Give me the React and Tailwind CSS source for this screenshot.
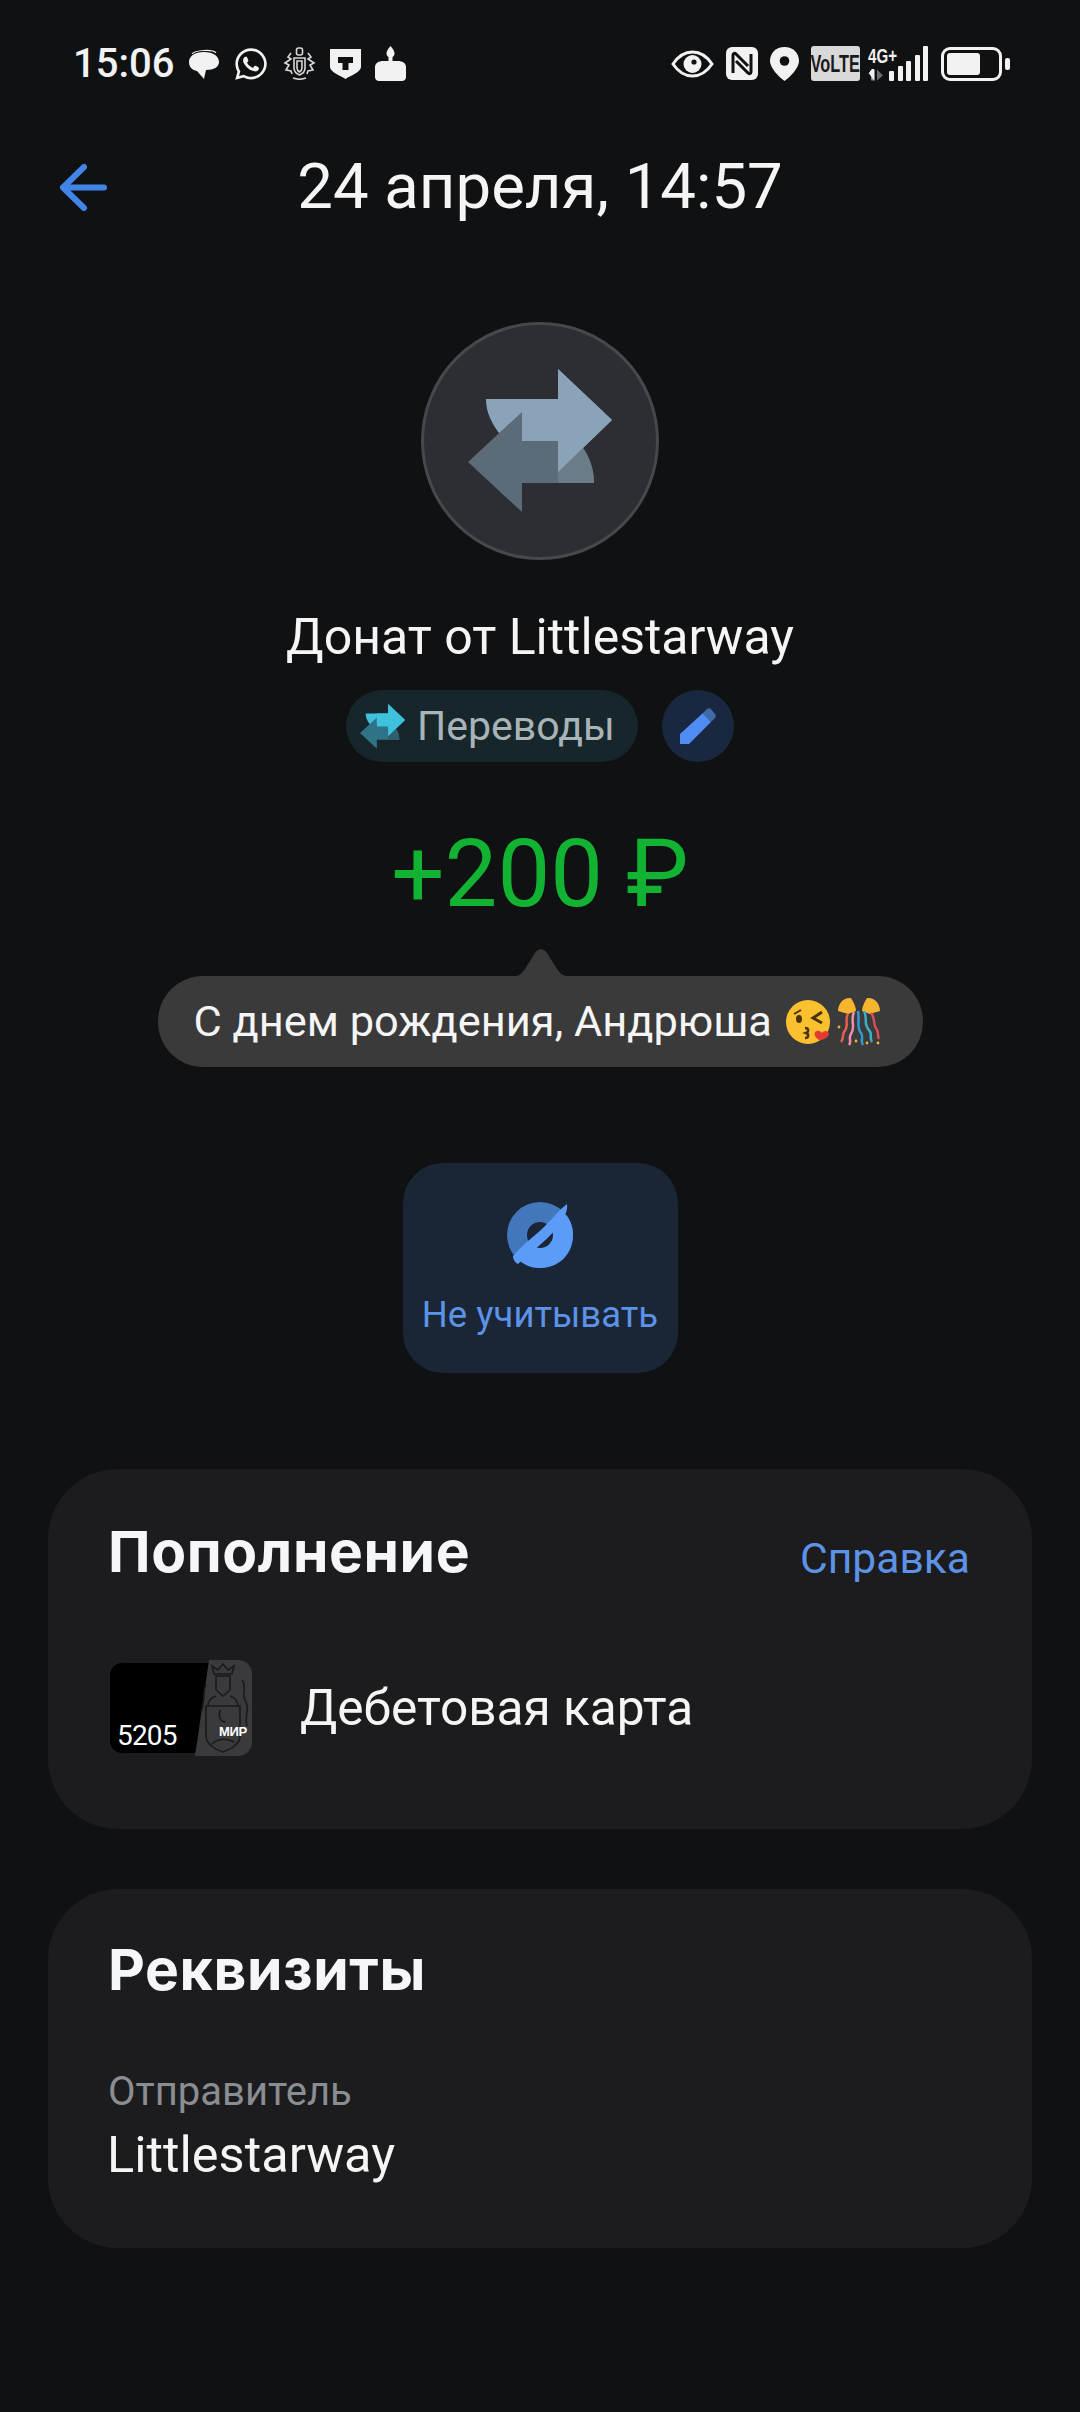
import { FaWhatsapp } from 'react-icons/fa';

const FONT = "font-['Roboto','Noto_Sans',sans-serif]";

function ArrowsIcon({ light, dark, mid, className }) {
  return (
    <svg viewBox="47 47 144 144" className={className}>
      <path d="M65 77H137V47L191 98L137 150V119H101V111H78C70 100 65 90 65 77Z" fill={light} />
      <path d="M173 161H101V190L47 140L101 90V119H137V126H162C169 136 173 148 173 161Z" fill={dark} />
      <path d="M137 126H162C169 136 173 148 173 161H137Z" fill={mid} />
      <path d="M137 47L191 98L137 150Z" fill={light} />
      <path d="M101 77H137V119H101V90Z" fill={light} />
    </svg>
  );
}

function MessageIcon() {
  return (
    <svg viewBox="0 0 30 30" className="h-[30px] w-[30px]">
      <path d="M3 5C6 1 24 0 27 4" fill="none" stroke="#f2f2f2" strokeWidth="1.2" />
      <path d="M0 13C0 7 6 3 15 3C24 3 30 7 30 13C30 18 25 21 17 21L15 30L8 22C3 21 0 18 0 13Z" fill="#f2f2f2" />
    </svg>
  );
}

function CrestIcon() {
  return (
    <svg viewBox="0 0 33 33" className="h-[33px] w-[33px]" fill="none" stroke="#d8d8d8" strokeWidth="1.6">
      <rect x="13.5" y="1" width="6" height="7" rx="2" />
      <path d="M11 11H22V21C22 25 19 27 16.5 28C14 27 11 25 11 21Z" />
      <path d="M14 14H19V21C19 23 18 24 16.5 25C15 24 14 23 14 21Z" />
      <path d="M8 6L5 10L8 12L2 16L6 18L3 23L8 24L9 27" />
      <path d="M25 6L28 10L25 12L31 16L27 18L30 23L25 24L24 27" />
      <path d="M10 31C14 32.5 19 32.5 23 31" />
    </svg>
  );
}

function ShieldIcon() {
  return (
    <svg viewBox="0 0 31 31" className="h-[31px] w-[31px]">
      <path d="M0 1H31V19C31 24 20 28 15.5 31C11 28 0 24 0 19Z" fill="#f2f2f2" />
      <path d="M8 9H23V15H18.5V22H12.5V15H8Z" fill="#101112" />
    </svg>
  );
}

function CakeIcon() {
  return (
    <svg viewBox="0 0 31 35" className="h-[35px] w-[31px]">
      <path d="M15.5 0C18 3 19.5 5 19.5 7.5C19.5 10 17.5 11.5 15.5 11.5C13.5 11.5 11.5 10 11.5 7.5C11.5 5 13 3 15.5 0Z" fill="#f2f2f2" />
      <path d="M13.5 11H17.5V16H13.5Z" fill="#f2f2f2" />
      <path d="M0 21C0 17 4 15 8 15H23C27 15 31 17 31 21V31C31 33.5 29 35 27 35H4C2 35 0 33.5 0 31Z" fill="#f2f2f2" />
    </svg>
  );
}

function EyeIcon() {
  return (
    <svg viewBox="0 0 43 28" className="h-[28px] w-[43px]">
      <path d="M2 14C8 5 14 2 21.5 2C29 2 35 5 41 14C35 23 29 26 21.5 26C14 26 8 23 2 14Z" fill="none" stroke="#f2f2f2" strokeWidth="3" />
      <circle cx="21.5" cy="14" r="9" fill="#f2f2f2" />
      <circle cx="23" cy="12" r="2.6" fill="#101112" />
    </svg>
  );
}

function NfcIcon() {
  return (
    <svg viewBox="0 0 32 33" className="h-[33px] w-[32px]">
      <rect width="32" height="33" rx="6" fill="#f2f2f2" />
      <path d="M7 26V8C7 6 9 6 10 7L22 19" fill="none" stroke="#101112" strokeWidth="3" />
      <path d="M25 7V25C25 27 23 27 22 26L10 14" fill="none" stroke="#101112" strokeWidth="3" />
    </svg>
  );
}

function PinIcon() {
  return (
    <svg viewBox="0 0 29 34" className="h-[34px] w-[29px]">
      <path d="M14.5 0C23 0 29 6 29 14C29 21 20 30 14.5 34C9 30 0 21 0 14C0 6 6 0 14.5 0Z" fill="#f2f2f2" />
      <circle cx="14.5" cy="14" r="4.8" fill="#101112" />
    </svg>
  );
}

function SignalBars() {
  const bars = [10, 15, 20, 26, 35];
  return (
    <div className="flex h-[35px] items-end gap-[3.5px]">
      {bars.map((h) => (
        <div key={h} className="w-[5px] rounded-[1px] bg-[#f2f2f2]" style={{ height: h }} />
      ))}
    </div>
  );
}

function StatusBar() {
  return (
    <div className={`flex h-[37px] items-center justify-between pl-[73px] pr-[70px] ${FONT}`}>
      <div className="flex items-center">
        <span className="text-[40px] leading-none font-medium text-[#f2f2f2]">15:06</span>
        <div className="ml-[15px] flex items-center gap-[14px]">
          <MessageIcon />
          <FaWhatsapp className="h-[36px] w-[36px] text-[#f2f2f2]" />
          <CrestIcon />
          <ShieldIcon />
          <CakeIcon />
        </div>
      </div>
      <div className="flex items-center">
        <EyeIcon />
        <div className="ml-[12px]"><NfcIcon /></div>
        <div className="ml-[12px]"><PinIcon /></div>
        <div className="ml-[12px] flex h-[35px] w-[49px] items-center justify-center rounded-[3px] bg-[#d9d9d9]">
          <span className="scale-x-[0.68] font-['Liberation_Sans',sans-serif] text-[24px] leading-none font-bold text-[#1a1a1a]">VoLTE</span>
        </div>
        <div className="ml-[8px] flex items-end">
          <div className="flex h-[35px] w-[21px] flex-col">
            <span className="origin-left scale-x-[0.72] font-['Liberation_Sans',sans-serif] text-[21px] leading-[20px] font-bold whitespace-nowrap text-[#f2f2f2]">4G+</span>
            <svg viewBox="0 0 16 11" className="mt-[3px] h-[12px] w-[16px]">
              <path d="M4 0V11M1 4L4 0L6 0V11" fill="#f2f2f2" stroke="#f2f2f2" strokeWidth="1" />
              <path d="M9 0V11L15 6Z" fill="#6d6d6d" />
            </svg>
          </div>
          <SignalBars />
        </div>
        <div className="ml-[13px] flex items-center">
          <div className="flex h-[34px] w-[61px] items-center rounded-[9px] border-[3px] border-[#f2f2f2] p-[3px]">
            <div className="h-[22px] w-[33px] rounded-[3px] bg-[#f2f2f2]" />
          </div>
          <div className="ml-[3px] h-[12px] w-[5px] rounded-[2px] bg-[#f2f2f2]" />
        </div>
      </div>
    </div>
  );
}

function IgnoreIcon() {
  return (
    <svg viewBox="0 0 66 66" className="h-[66px] w-[66px]">
      <circle cx="33" cy="33" r="33" fill="#4277bb" />
      <path d="M58 12C64 18 66 26 66 33C66 52 52 66 33 66C24 66 17 63 11 57Z" fill="#5b9cf8" />
      <circle cx="33" cy="33" r="13" fill="#1a2536" />
      <path d="M60 2C61 8 58 16 48 28C38 40 24 50 11 62C7 60 6 56 6 54C16 42 28 34 38 24C46 16 52 8 60 2Z" fill="#5b9cf8" />
    </svg>
  );
}

function KissEmoji() {
  return (
    <svg viewBox="0 0 46 46" className="h-[46px] w-[46px]">
      <circle cx="22" cy="23" r="22" fill="#fbc02d" />
      <path d="M8 15L15 11" stroke="#4a3410" strokeWidth="2" fill="none" />
      <ellipse cx="13" cy="20" rx="3" ry="4" fill="#4a3410" />
      <path d="M36 13L27 19L36 24" stroke="#4a3410" strokeWidth="3" fill="none" />
      <path d="M19 29C23 29 23 33 20 34C23 35 23 39 19 39" stroke="#4a3410" strokeWidth="2.5" fill="none" />
      <path d="M33 41C28 38 27 33 31 32C33 31 35 33 36 34C37 32 40 31 42 33C45 36 40 41 33 41Z" fill="#e53935" />
    </svg>
  );
}

function ConfettiEmoji() {
  return (
    <svg viewBox="0 0 46 50" className="h-[50px] w-[46px]" fill="none" strokeWidth="2.5">
      <path d="M2 14C2 6 8 0 15 1C18 6 20 10 20 14L12 17Z" fill="#f5b52e" />
      <path d="M44 14C44 6 38 0 31 1C28 6 26 10 26 14L34 17Z" fill="#f5b52e" />
      <path d="M12 17C8 24 14 28 8 35C6 38 8 42 5 45" stroke="#e4604e" />
      <path d="M18 15C14 24 20 30 15 37C12 41 16 44 13 48" stroke="#f08fa8" />
      <path d="M22 14C24 24 20 30 25 36C28 40 24 44 27 48" stroke="#2f9ad6" />
      <path d="M28 14C32 22 27 27 33 33C37 37 33 41 36 45" stroke="#3ab0c9" />
      <path d="M35 16C40 22 36 27 41 33C43 36 41 39 43 42" stroke="#d94e57" />
      <circle cx="3" cy="30" r="1.4" fill="#f5b52e" stroke="none" />
      <circle cx="20" cy="44" r="1.4" fill="#f5b52e" stroke="none" />
      <circle cx="42" cy="46" r="1.4" fill="#f5b52e" stroke="none" />
      <circle cx="31" cy="46" r="1.4" fill="#f5b52e" stroke="none" />
    </svg>
  );
}

function BankCard() {
  return (
    <div className="relative h-[96px] w-[142px]">
      <div className="absolute top-[3px] left-0 flex h-[90px] w-[130px] items-end rounded-[12px] bg-black pb-[3px] pl-[7px]">
        <span className="text-[28px] leading-none tracking-[-0.8px] text-white">5205</span>
      </div>
      <svg viewBox="5 0 57 96" className="absolute top-0 right-0 h-[96px] w-[57px]">
        <path d="M19 0H48C56 0 62 6 62 14V82C62 90 56 96 48 96H5Z" fill="#3a3a3c" />
        <g fill="none" stroke="#1a1a1b" strokeWidth="1.6">
          <path d="M24 14L22 6L28 10L33 4L38 10L44 6L42 14Z" />
          <path d="M26 16H40V30L33 36L26 30Z" />
          <path d="M16 46H50V76C50 84 40 90 33 92C26 90 16 84 16 76Z" />
          <path d="M26 36C20 38 18 42 18 46M40 36C46 38 48 42 48 46" />
          <path d="M30 50C28 56 30 62 36 62M22 84C28 78 38 78 44 82" />
          <path d="M52 20C58 28 50 34 56 42C60 50 54 56 57 66" />
          <path d="M16 24C12 34 16 40 11 52" />
        </g>
      </svg>
      <span className="absolute top-[65px] right-[5px] font-['Liberation_Sans',sans-serif] text-[13px] leading-none font-bold tracking-[-0.3px] text-white">МИР</span>
    </div>
  );
}

export default function App() {
  return (
    <div className={`flex min-h-[2412px] flex-col bg-[#101112] pt-[45px] ${FONT}`}>
      <StatusBar />

      <div className="mt-[67px] grid h-[76px] grid-cols-[1fr_auto_1fr] items-center px-[60px]">
        <svg viewBox="0 0 47 47" className="h-[47px] w-[47px]" fill="none" stroke="#4285e8" strokeWidth="6" strokeLinecap="round" strokeLinejoin="round">
          <path d="M24 3L3 23.5L24 44M3 23.5H44" />
        </svg>
        <h1 className="text-[63.5px] leading-none font-normal text-[#f5f5f5]">24 апреля, 14:57</h1>
        <div />
      </div>

      <div className="mt-[97px] flex flex-col items-center">
        <div className="flex h-[238px] w-[238px] items-center justify-center rounded-full border-[3px] border-[#46484b] bg-[#2c2e33]">
          <ArrowsIcon light="#8ba3b8" dark="#5b6b78" mid="#6b7c89" className="h-[144px] w-[144px]" />
        </div>

        <div className="mt-[47px] text-[50px] leading-[60px] text-[#f5f5f5]">Донат от Littlestarway</div>

        <div className="mt-[23px] flex items-center gap-[24px]">
          <div className="flex h-[72px] w-[292px] items-center rounded-full bg-[#16262a] pl-[14px]">
            <ArrowsIcon light="#3fc1dc" dark="#2f7386" mid="#2f5f6e" className="h-[45px] w-[45px]" />
            <span className="ml-[12px] text-[41px] leading-none text-[#a9b4b8]">Переводы</span>
          </div>
          <div className="flex h-[72px] w-[72px] items-center justify-center rounded-full bg-[#1a2740]">
            <svg viewBox="0 0 36 36" className="h-[36px] w-[36px]">
              <path d="M0 26L23 5L31 14L9 36H0Z" fill="#4f8df5" />
              <path d="M23 5L27 1C28 0 30 0 31 1L35 6C36 7 36 9 35 10L31 14Z" fill="#3f6aa8" />
            </svg>
          </div>
        </div>

        <div className="mt-[58px] text-[94px] leading-[108px] font-normal text-[#12b233]">+200 ₽</div>

        <div className="relative mt-[48px] flex h-[91px] w-[765px] items-center rounded-[45px] bg-[#3a3a3b] pl-[36px]">
          <svg viewBox="0 0 64 28" className="absolute -top-[27px] left-[351px] h-[28px] w-[64px]">
            <path d="M0 28C8 28 12 26 16 20L26 4C29 -1 35 -1 38 4L48 20C52 26 56 28 64 28Z" fill="#3a3a3b" />
          </svg>
          <span className="text-[43.4px] leading-none text-[#f5f5f5]">С днем рождения, Андрюша</span>
          <div className="ml-[14px] flex items-center gap-[4px]">
            <KissEmoji />
            <ConfettiEmoji />
          </div>
        </div>

        <div className="mt-[96px] flex h-[210px] w-[275px] flex-col items-center rounded-[40px] bg-[#1a2536] pt-[39px]">
          <IgnoreIcon />
          <span className="mt-[25px] text-[36.5px] leading-[44px] text-[#5c93e6]">Не учитывать</span>
        </div>
      </div>

      <div className="mx-[48px] mt-[96px] flex h-[360px] flex-col rounded-[70px] bg-[#1c1c1e] px-[62px] pt-[50px]">
        <div className="flex items-center justify-between">
          <h2 className="-ml-[2px] font-['Inter',sans-serif] text-[57px] leading-[66px] font-bold tracking-[0.6px] text-[#f5f6f8]">Пополнение</h2>
          <span className="mt-[11px] text-[42.6px] leading-[50px] text-[#5c93e6]">Справка</span>
        </div>
        <div className="mt-[75px] flex items-center">
          <BankCard />
          <span className="mt-[2px] ml-[48px] text-[49.6px] leading-none text-[#f5f5f5]">Дебетовая карта</span>
        </div>
      </div>

      <div className="mx-[48px] mt-[60px] flex h-[359px] flex-col rounded-[70px] bg-[#1c1c1e] px-[60px] pt-[48px]">
        <h2 className="font-['Inter',sans-serif] text-[57px] leading-[66px] font-bold tracking-[0.6px] text-[#f5f6f8]">Реквизиты</h2>
        <div className="mt-[65px] text-[40px] leading-[48px] text-[#8a8d91]">Отправитель</div>
        <div className="mt-[9px] -ml-[1px] text-[50.5px] leading-[60px] text-[#f5f5f5]">Littlestarway</div>
      </div>
    </div>
  );
}
